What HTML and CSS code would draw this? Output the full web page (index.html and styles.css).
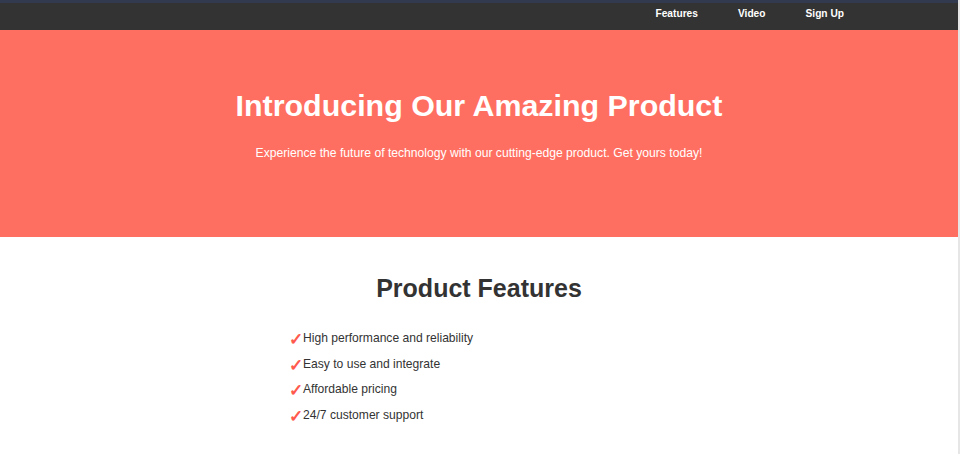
FILE: index.html
```html
<!DOCTYPE HTML>
<html>
<head>
  <meta charset="UTF-8">
  <title>Amazing Product</title>
  <link rel="stylesheet" href="styles.css">
</head>
<body>

  <div class="page">
    <header class="topbar">
      <nav class="nav">
        <a href="#features" class="nav-link">Features</a>
        <a href="#video" class="nav-link">Video</a>
        <a href="#signup" class="nav-link">Sign Up</a>
      </nav>
    </header>

    <section class="hero">
      <h1>Introducing Our Amazing Product</h1>
      <p>Experience the future of technology with our cutting-edge product. Get yours today!</p>
    </section>

    <section class="features" id="features">
      <h2>Product Features</h2>
      <ul class="feature-list">
        <li>High performance and reliability</li>
        <li>Easy to use and integrate</li>
        <li>Affordable pricing</li>
        <li>24/7 customer support</li>
      </ul>
    </section>
  </div>

</body>
</html>
```

FILE: styles.css
```css
html, body {
  margin: 0;
  padding: 0;
}
body {
  font-family: "Liberation Sans", Arial, sans-serif;
  background-color: #e6e6e6;
  color: #333;
}
.page {
  margin-right: 2px;
  background-color: #fff;
  min-height: 454px;
}
.topbar {
  background-color: #333;
  border-top: 3px solid #323a50;
  height: 30px;
  box-sizing: border-box;
  padding-top: 5px;
  display: flex;
  justify-content: flex-end;
}
.nav {
  display: flex;
  gap: 40px;
  padding-right: 114px;
}
.nav-link {
  color: #fff;
  text-decoration: none;
  font-weight: bold;
  font-size: 10.2px;
  line-height: 12px;
}
.hero {
  background-color: #ff6f61;
  color: #fff;
  text-align: center;
  height: 207px;
  padding-top: 1px;
  box-sizing: border-box;
}
.hero h1 {
  font-size: 30.4px;
  line-height: 36px;
  margin: 56px 0 0;
}
.hero p {
  font-size: 12.15px;
  line-height: 14px;
  margin: 23px 0 0;
}
.features {
  text-align: center;
  padding-top: 37px;
}
.features h2 {
  font-size: 25px;
  margin: 0 0 27px;
}
.feature-list {
  list-style: none;
  text-align: left;
  width: 380px;
  margin: 0 auto;
  padding: 0;
}
.feature-list li {
  font-size: 12.1px;
  line-height: 16px;
  margin-bottom: 9.7px;
}
.feature-list li::before {
  content: "\2713";
  color: #ff5a4d;
  font-weight: bold;
  font-size: 17px;
  line-height: 0;
  position: relative;
  top: 3px;
}
```
